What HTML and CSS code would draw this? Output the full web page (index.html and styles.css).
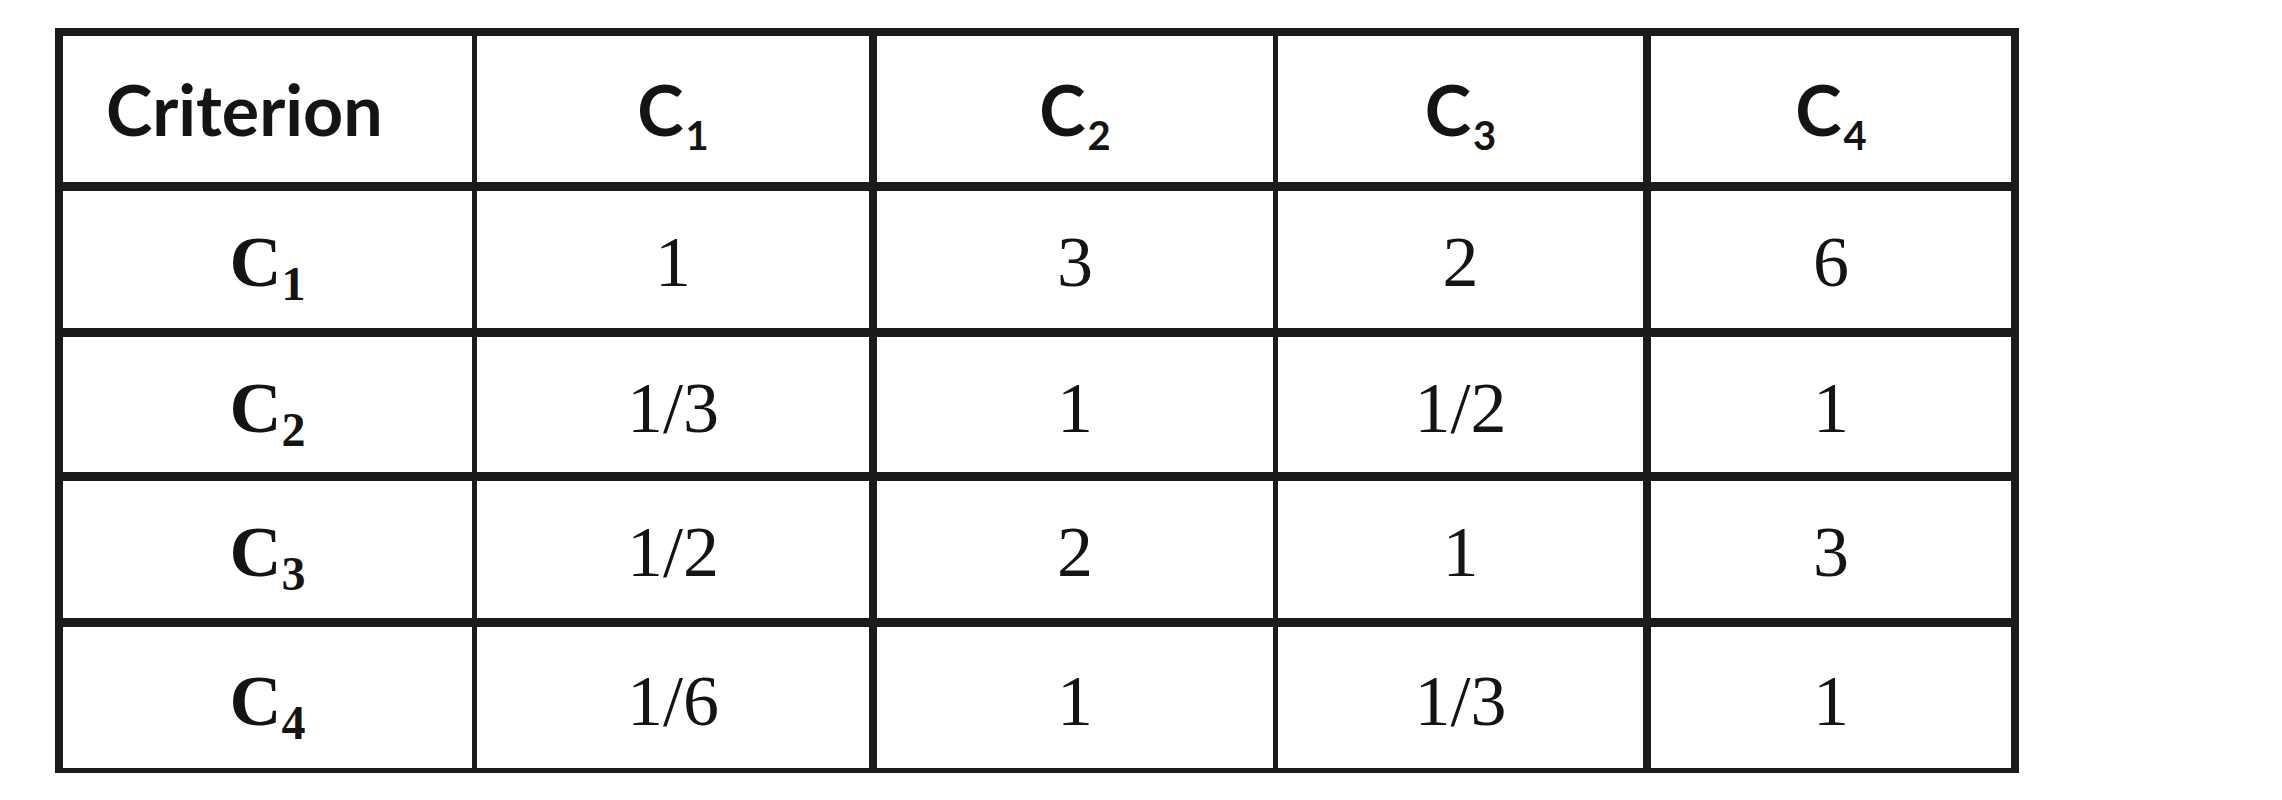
FILE: index.html
```html
<!DOCTYPE html>
<html lang="en">
<head>
<meta charset="utf-8">
<title>Pairwise comparison matrix</title>
<link rel="stylesheet" href="styles.css">
</head>
<body>
<div class="matrix" role="table">
  <div class="row head" role="row">
    <div class="cell label" role="columnheader"><span class="txt">Criterion</span></div>
    <div class="cell" role="columnheader"><span class="txt">C<span class="sub">1</span></span></div>
    <div class="cell" role="columnheader"><span class="txt">C<span class="sub">2</span></span></div>
    <div class="cell" role="columnheader"><span class="txt">C<span class="sub">3</span></span></div>
    <div class="cell" role="columnheader"><span class="txt">C<span class="sub">4</span></span></div>
  </div>
  <div class="row body" role="row">
    <div class="cell rowhead" role="rowheader"><span class="txt">C<span class="sub">1</span></span></div>
    <div class="cell" role="cell"><span class="txt">1</span></div>
    <div class="cell" role="cell"><span class="txt">3</span></div>
    <div class="cell" role="cell"><span class="txt">2</span></div>
    <div class="cell" role="cell"><span class="txt">6</span></div>
  </div>
  <div class="row body" role="row">
    <div class="cell rowhead" role="rowheader"><span class="txt">C<span class="sub">2</span></span></div>
    <div class="cell" role="cell"><span class="txt">1/3</span></div>
    <div class="cell" role="cell"><span class="txt">1</span></div>
    <div class="cell" role="cell"><span class="txt">1/2</span></div>
    <div class="cell" role="cell"><span class="txt">1</span></div>
  </div>
  <div class="row body" role="row">
    <div class="cell rowhead" role="rowheader"><span class="txt">C<span class="sub">3</span></span></div>
    <div class="cell" role="cell"><span class="txt">1/2</span></div>
    <div class="cell" role="cell"><span class="txt">2</span></div>
    <div class="cell" role="cell"><span class="txt">1</span></div>
    <div class="cell" role="cell"><span class="txt">3</span></div>
  </div>
  <div class="row body last" role="row">
    <div class="cell rowhead" role="rowheader"><span class="txt">C<span class="sub">4</span></span></div>
    <div class="cell" role="cell"><span class="txt">1/6</span></div>
    <div class="cell" role="cell"><span class="txt">1</span></div>
    <div class="cell" role="cell"><span class="txt">1/3</span></div>
    <div class="cell" role="cell"><span class="txt">1</span></div>
  </div>
</div>
</body>
</html>
```

FILE: styles.css
```css
html, body {
  margin: 0;
  padding: 0;
  background: #ffffff;
}

body {
  padding: 28px 0 0 55px;
}

.matrix {
  display: grid;
  width: max-content;
  grid-template-columns: 414px 400px 401px 373px 368px;
  grid-template-rows: 155px 146px 144px 146px 146px;
  border-left: 8px solid #1b1b1b;
  border-top: 8px solid #1b1b1b;
  color: #141414;
}

.row {
  display: contents;
}

.cell {
  box-sizing: border-box;
  display: flex;
  align-items: flex-start;
  justify-content: center;
  border-style: solid;
  border-color: #1b1b1b;
  border-width: 0 8px 9px 0;
  white-space: nowrap;
}

.cell:nth-child(1),
.cell:nth-child(3) {
  border-right-width: 5px;
}

.row.last .cell {
  border-bottom-width: 5px;
}

.txt {
  display: block;
}

/* header row: bold sans */
.head .cell {
  font-family: Lato, "Liberation Sans", sans-serif;
  font-weight: 700;
  font-size: 70px;
  line-height: 70px;
  padding-top: 38px;
}

.head .cell.label {
  justify-content: flex-start;
  padding-left: 43px;
}

.head .sub {
  font-size: 40px;
  line-height: 1;
  vertical-align: -14px;
  margin-left: 2px;
}

/* body rows: serif */
.body .cell {
  font-family: "Liberation Serif", "Times New Roman", serif;
  font-weight: 400;
  font-size: 72px;
  line-height: 72px;
  padding-top: 35px;
}

.row.last .cell {
  padding-top: 38px;
}

.body .cell.rowhead {
  font-weight: 700;
}

.body .sub {
  font-size: 48px;
  line-height: 1;
  vertical-align: -14px;
}
```
